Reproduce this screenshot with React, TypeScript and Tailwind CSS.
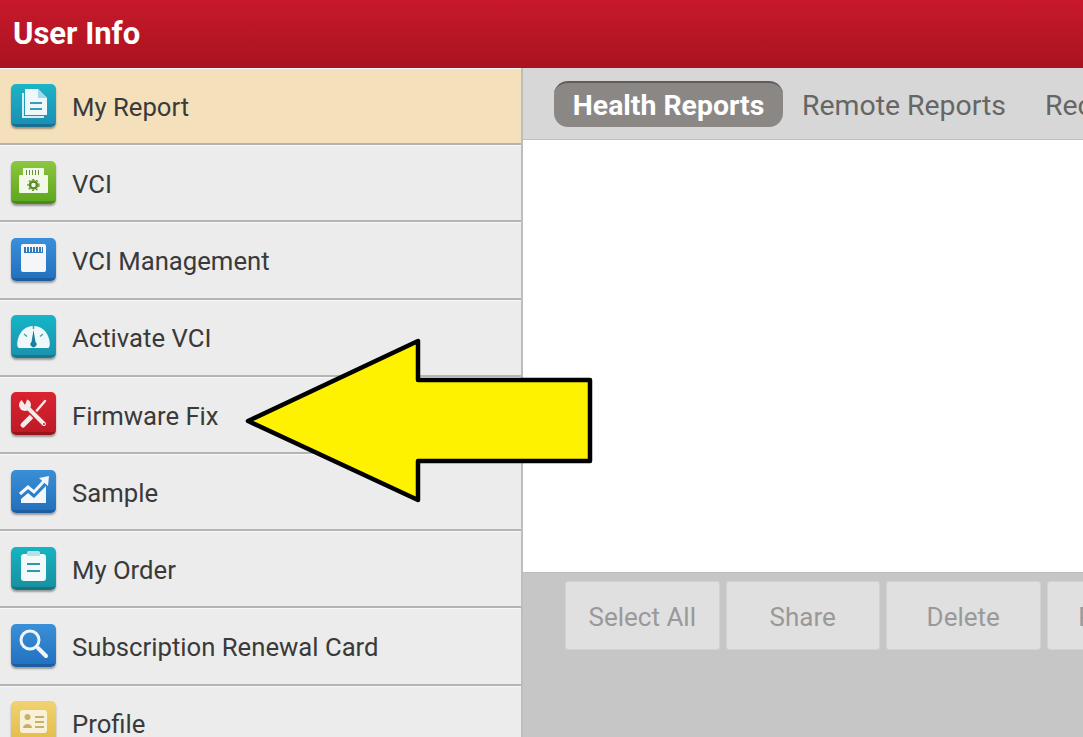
import React from "react";

const Tile = ({ from, to, edge, children }: { from: string; to: string; edge: string; children: React.ReactNode }) => (
  <div
    className="relative w-[45px] h-[43px] rounded-[5px] shrink-0 overflow-hidden shadow-[0_2px_2px_rgba(0,0,0,0.35)]"
    style={{ background: `linear-gradient(${from}, ${to})`, borderBottom: `3px solid ${edge}` }}
  >
    <svg viewBox="0 0 45 40" className="absolute inset-0 w-[45px] h-[40px]">{children}</svg>
  </div>
);

const icons: Record<string, React.ReactNode> = {
  report: (
    <Tile from="#1cb4c6" to="#1b8fb5" edge="#17708f">
      <path d="M11 9h2v23h20v2H11z" fill="#d8eef5" />
      <path d="M14 5h13l9 9v17H14z" fill="#eef8fb" />
      <path d="M27 5l9 9h-9z" fill="#a5d8e6" />
      <path d="M19 18h12v2H19zM19 24h12v2H19z" fill="#3d9bb8" />
    </Tile>
  ),
  vci: (
    <Tile from="#8cc63f" to="#5fa81f" edge="#4a8a18">
      <path d="M12 7h20a1 1 0 0 1 1 1v6h3a1 1 0 0 1 1 1v16a1 1 0 0 1-1 1H9a1 1 0 0 1-1-1V15a1 1 0 0 1 1-1h3z" fill="#f3f9e8" />
      <path d="M15 9h1v5h-1zM18 9h1v5h-1zM21 9h1v5h-1zM24 9h1v5h-1zM27 9h1v5h-1z" fill="#6b8f3a" />
      <circle cx="22.500" cy="24" r="3.500" fill="none" stroke="#5b8a22" strokeWidth="2.500" />
      <circle cx="22.500" cy="24" r="5.500" fill="none" stroke="#5b8a22" strokeWidth="1.200" strokeDasharray="2 2" />
    </Tile>
  ),
  mgmt: (
    <Tile from="#3a90d8" to="#2372c0" edge="#1d5ea3">
      <rect x="10" y="6" width="25" height="28" rx="2" fill="#f4f6f8" />
      <path d="M13 9h19v6H13z" fill="#3478b8" />
      <path d="M15 9h1v5h-1zM18 9h1v5h-1zM21 9h1v5h-1zM24 9h1v5h-1zM27 9h1v5h-1zM30 9h1v5h-1z" fill="#eef4f9" />
    </Tile>
  ),
  gauge: (
    <Tile from="#16b5c8" to="#1a93ae" edge="#14788f">
      <path d="M8 33C4 33 6 11 22.500 11S41 33 37 33z" fill="#eef8fa" />
      <path d="M22.500 15l2 12a3 3 0 1 1-4 0z" fill="#1a7f9c" />
      <path d="M13 19l3 2.500M32 19l-3 2.500M22.500 11v3" stroke="#4a9db2" strokeWidth="1.500" />
    </Tile>
  ),
  fix: (
    <Tile from="#da2430" to="#bf1a27" edge="#98141f">
      <path d="M34 9L22 23" stroke="#f6e9e9" strokeWidth="2.500" strokeLinecap="round" />
      <path d="M20 25L12 33" stroke="#f6e9e9" strokeWidth="5" strokeLinecap="round" />
      <path d="M15 14L33 32" stroke="#cf1f2b" strokeWidth="7" />
      <path d="M15 14L33 32" stroke="#f6e9e9" strokeWidth="4" strokeLinecap="round" />
      <circle cx="14" cy="13" r="6" fill="#f6e9e9" />
      <path d="M14 13L8 4L17 5z" fill="#d4202c" />
      <circle cx="33" cy="32" r="1" fill="#cf1f2b" />
    </Tile>
  ),
  sample: (
    <Tile from="#3a8fd6" to="#2470bd" edge="#1d5ea3">
      <path d="M9 24L17 17L23 22L33 11" fill="none" stroke="#f2f7fb" strokeWidth="3" />
      <path d="M28 8L38 6L37 16z" fill="#f2f7fb" />
      <path d="M10 29L17 23L23 28L35 16V33H10z" fill="#f2f7fb" />
    </Tile>
  ),
  order: (
    <Tile from="#16b4c2" to="#18919f" edge="#137683">
      <rect x="10" y="7" width="25" height="27" rx="3" fill="#f3f9fa" />
      <rect x="16" y="4" width="13" height="5" rx="1.500" fill="#b5e0e6" />
      <path d="M16 16h13v2H16zM16 23h13v2H16z" fill="#2a9aa9" />
    </Tile>
  ),
  search: (
    <Tile from="#3a90d8" to="#2372c0" edge="#1d5ea3">
      <circle cx="19" cy="16" r="9" fill="none" stroke="#eef5fb" strokeWidth="3" />
      <path d="M27 24l8 8" stroke="#eef5fb" strokeWidth="4" strokeLinecap="round" />
    </Tile>
  ),
  profile: (
    <Tile from="#f0d272" to="#e3bd4a" edge="#c9a43a">
      <rect x="9" y="9" width="27" height="23" rx="3" fill="#f8f1d8" />
      <circle cx="16.500" cy="16" r="3" fill="#c9b06a" />
      <path d="M12 27a4.500 4 0 0 1 9 0z" fill="#c9b06a" />
      <path d="M24 15h9v2h-9zM24 20h9v2h-9zM24 25h9v2h-9z" fill="#c9b06a" />
    </Tile>
  ),
};

const items = [
  ["My Report", "report"],
  ["VCI", "vci"],
  ["VCI Management", "mgmt"],
  ["Activate VCI", "gauge"],
  ["Firmware Fix", "fix"],
  ["Sample", "sample"],
  ["My Order", "order"],
  ["Subscription Renewal Card", "search"],
  ["Profile", "profile"],
];

export default function App() {
  return (
    <div className="relative w-[1083px] h-[737px] overflow-hidden bg-white font-['Roboto',sans-serif]">
      <header className="h-[68px] flex items-center pl-[13px] bg-gradient-to-b from-[#c8192b] to-[#a9131f]">
        <span className="text-white text-[31px] font-bold">User Info</span>
      </header>
      <div className="flex h-[669px]">
        <nav className="w-[523px] shrink-0 border-r-2 border-[#bdbdbd] bg-[#ececec] overflow-hidden">
          {items.map(([label, icon], i) => (
            <div
              key={label}
              className={`h-[77.2px] flex items-center gap-[16px] pl-[11px] pb-[1px] border-b-2 border-[#b4b4b4] shadow-[inset_0_1px_0_#f8f8f8] ${i === 0 ? "bg-[#f4e1bb]" : ""}`}
            >
              {icons[icon]}
              <span className="pt-[4px] text-[25.7px] text-[#3a3a3a] whitespace-nowrap">{label}</span>
            </div>
          ))}
        </nav>
        <main className="flex-1 min-w-0 flex flex-col">
          <div className="h-[72px] shrink-0 flex items-center pl-[31px] gap-[19px] bg-[#d7d7d7] border-b border-[#bfbfbf] text-[28.4px] whitespace-nowrap">
            <div className="h-[46px] w-[229px] shrink-0 flex items-center justify-center pt-[4px] rounded-[14px] bg-[#8b8785] border-t-2 border-[#5f5c5a] text-white font-bold">
              Health Reports
            </div>
            <span className="text-[#666666] shrink-0 pt-[6px]">Remote Reports</span>
            <span className="text-[#666666] shrink-0 pt-[6px] ml-[20px]">Recent Reports</span>
          </div>
          <div className="h-[432px] shrink-0 bg-white" />
          <div className="flex-1 bg-[#c6c6c6] flex items-start pt-[8px] pl-[42px] gap-[6px] overflow-hidden border-t border-[#bcbcbc]">
            {["Select All", "Share", "Delete", "Preview"].map((b) => (
              <div
                key={b}
                className="w-[154.500px] h-[69px] shrink-0 flex items-center justify-center pt-[3px] rounded-[3px] bg-[#e0e0e0] border border-[#d2d2d2] text-[26px] text-[#999999] whitespace-nowrap"
              >
                {b}
              </div>
            ))}
          </div>
        </main>
      </div>
      <svg className="absolute left-0 top-0 pointer-events-none" width="1083" height="737" viewBox="0 0 1083 737">
        <path d="M248 421L418 341V380H590V461H418V500Z" fill="#fff200" stroke="#000" strokeWidth="4.500" strokeLinejoin="round" />
      </svg>
    </div>
  );
}
